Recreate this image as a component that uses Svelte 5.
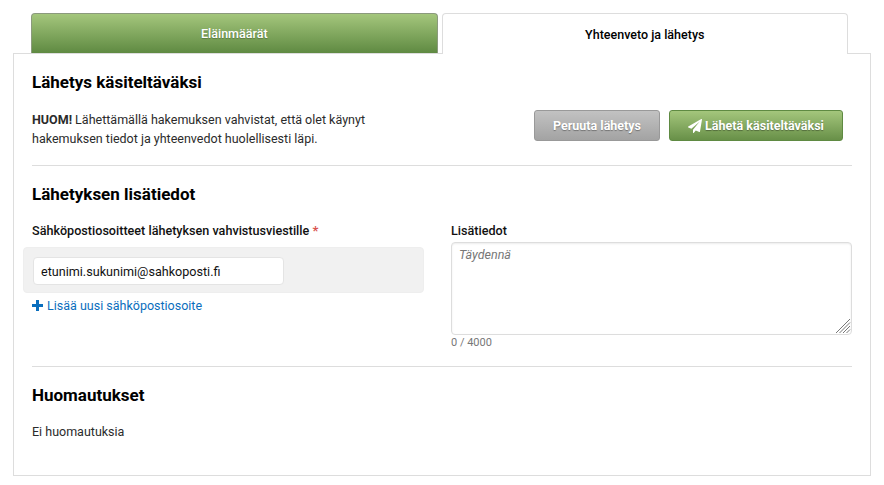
<script lang="ts">
  let email = 'etunimi.sukunimi@sahkoposti.fi';
  let notes = '';
</script>

<div class="page">
  <div class="tabs">
    <div class="tab green">Eläinmäärät</div>
    <div class="tab active">Yhteenveto ja lähetys</div>
  </div>

  <div class="panel">
    <section class="send">
      <h2>Lähetys käsiteltäväksi</h2>
      <div class="send-row">
        <p><strong>HUOM!</strong> Lähettämällä hakemuksen vahvistat, että olet käynyt hakemuksen tiedot ja yhteenvedot huolellisesti läpi.</p>
        <div class="actions">
          <button class="btn grey">Peruuta lähetys</button>
          <button class="btn primary">
            <svg viewBox="0 0 1792 1792" width="14" height="14" aria-hidden="true">
              <path d="M1764 11q33 24 27 64l-256 1536q-5 29-32 45-14 8-31 8-11 0-24-5l-453-185-242 295q-18 23-49 23-13 0-22-4-19-7-30.5-23.5t-11.5-36.5v-349l864-1059-1069 925-395-162q-37-14-40-55-2-40 32-59l1664-960q15-9 32-9 20 0 36 11z" fill="currentColor" />
            </svg>
            Lähetä käsiteltäväksi
          </button>
        </div>
      </div>
    </section>

    <section class="details">
      <h2>Lähetyksen lisätiedot</h2>
      <div class="columns">
        <div class="col">
          <label class="lbl" for="email">Sähköpostiosoitteet lähetyksen vahvistusviestille <span class="req">*</span></label>
          <div class="email-box">
            <input id="email" type="text" bind:value={email} />
          </div>
          <a class="add" href="#add">
            <svg viewBox="0 0 11 11" width="11" height="11" aria-hidden="true">
              <path d="M4 0h3v4h4v3H7v4H4V7H0V4h4z" fill="currentColor" />
            </svg>
            Lisää uusi sähköpostiosoite
          </a>
        </div>
        <div class="col">
          <label class="lbl" for="notes">Lisätiedot</label>
          <div class="area-wrap">
            <textarea id="notes" placeholder="Täydennä" bind:value={notes}></textarea>
            <svg class="grip" viewBox="0 0 16 16" width="16" height="16" aria-hidden="true">
              <path d="M1 15 15 1M4.5 15 15 4.5M8 15l7-7M11.500 15l3.500-3.500" stroke="#777" stroke-width="1" fill="none" />
            </svg>
          </div>
          <div class="counter">{notes.length} / 4000</div>
        </div>
      </div>
    </section>

    <section class="remarks">
      <h2>Huomautukset</h2>
      <p>Ei huomautuksia</p>
    </section>
  </div>
</div>

<style>
  :global(body) { background: #fff; }

  .page {
    padding: 13px 13px 0;
    font-family: Roboto, sans-serif;
    font-size: 12.5px;
    line-height: 19px;
    color: #2b2b2b;
  }

  .tabs { display: flex; gap: 4px; padding-left: 18px; width: 817px; }
  .tab {
    flex: 1;
    height: 40px;
    box-sizing: border-box;
    display: flex;
    align-items: center;
    justify-content: center;
    font-weight: 500;
    border-radius: 4px 4px 0 0;
  }
  .tab.green {
    color: #fff;
    background: linear-gradient(#a4c67c, #5f8a42);
    border: 1px solid #8b9a7d;
    border-bottom: none;
    text-shadow: 0 1px 1px rgba(0, 0, 0, .25);
  }
  .tab.active {
    color: #000;
    background: #fff;
    border: 1px solid #ddd;
    border-bottom: none;
    margin-bottom: -1px;
    height: 41px;
    position: relative;
  }

  .panel {
    box-sizing: border-box;
    width: 858px;
    height: 423px;
    border: 1px solid #ddd;
    padding: 0 18px;
  }

  h2 {
    margin: 0;
    font-size: 17px;
    line-height: 22px;
    font-weight: 700;
    color: #000;
  }
  p { margin: 0; }
  strong { font-weight: 700; }

  .send { padding: 17px 0 10px; border-bottom: 1px solid #ddd; width: 820px; height: 112px; box-sizing: border-box; }
  .send-row { display: flex; justify-content: space-between; align-items: flex-start; margin-top: 17px; }
  .send-row p { width: 350px; }
  .actions { display: flex; gap: 9px; margin: 0 9px 0 0; }

  .btn {
    height: 31px;
    box-sizing: border-box;
    border-radius: 3px;
    color: #fff;
    font: 700 12.5px Roboto, sans-serif;
    text-shadow: 0 1px 1px rgba(0, 0, 0, .35);
    display: flex;
    align-items: center;
    justify-content: center;
    gap: 3px;
  }
  .grey {
    width: 126px;
    border: 1px solid #999;
    background: linear-gradient(#c2c2c2, #a3a3a3);
  }
  .primary {
    width: 174px;
    border: 1px solid #5f8a42;
    background: linear-gradient(#a4c67c, #689048);
  }

  .details { padding-top: 17px; height: 201px; box-sizing: border-box; border-bottom: 1px solid #ddd; width: 820px; }
  .columns { display: grid; grid-template-columns: 1fr 401px; column-gap: 27px; margin-top: 16px; }
  .col { min-width: 0; }
  .lbl { display: block; font-size: 12.6px; font-weight: 500; color: #111; height: 19px; }
  .req { color: #d9534f; font-weight: 700; font-size: 13px; line-height: 1; }

  .email-box {
    margin: 7px 0 0 -9px;
    height: 46px;
    box-sizing: border-box;
    padding: 9px;
    background: #f1f1f1;
    border: 1px solid #eee;
    border-radius: 4px;
  }
  input {
    display: block;
    width: 251px;
    height: 28px;
    box-sizing: border-box;
    padding: 0 7px;
    border: 1px solid #e4e4e4;
    border-radius: 4px;
    background: #fff;
    color: #111;
    font: 12.6px Roboto, sans-serif;
    outline: none;
  }
  .add {
    display: flex;
    align-items: center;
    gap: 4px;
    margin-top: 3px;
    color: #0a6ebd;
    text-decoration: none;
  }

  .area-wrap { position: relative; margin-top: 2px; height: 93px; }
  textarea {
    display: block;
    width: 401px;
    height: 93px;
    box-sizing: border-box;
    padding: 2px 7px;
    border: 1px solid #ddd;
    border-radius: 4px;
    box-shadow: inset 0 1px 2px rgba(0, 0, 0, .08);
    font: 12.5px/19px Roboto, sans-serif;
    color: #333;
    outline: none;
    resize: none;
  }
  textarea::placeholder { font-style: italic; color: #777; opacity: 1; }
  .grip { position: absolute; right: 1px; bottom: 1px; pointer-events: none; }
  .counter { margin-top: 1px; font-size: 11px; line-height: 14px; color: #777; }

  .remarks { padding-top: 17px; }
  .remarks p { margin-top: 16px; }
</style>
